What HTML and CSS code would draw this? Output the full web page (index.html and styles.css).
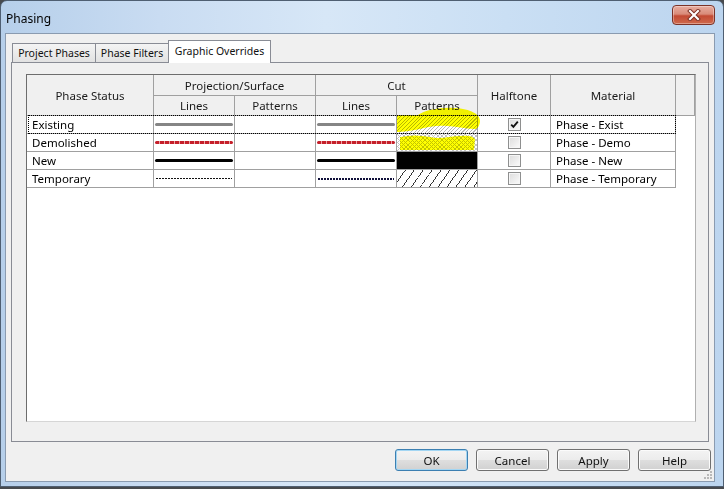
FILE: index.html
```html
<!DOCTYPE html>
<html>
<head>
<meta charset="utf-8">
<link rel="stylesheet" href="styles.css">
</head>
<body>
<div class="window">
  <div class="titlebar">
    <span class="title">Phasing</span>
    <div class="close">
      <svg width="16" height="12" viewBox="0 0 16 12">
        <path d="M4 2 L12 10 M12 2 L4 10" stroke="#7a3024" stroke-width="4" stroke-linecap="square" fill="none"/>
        <path d="M4 2 L12 10 M12 2 L4 10" stroke="#fff" stroke-width="2.1" stroke-linecap="square" fill="none"/>
      </svg>
    </div>
  </div>
  <div class="client">
    <div class="tabs">
      <div class="tab t1">Project Phases</div>
      <div class="tab t2">Phase Filters</div>
      <div class="tab t3">Graphic Overrides</div>
    </div>
    <div class="panel">
      <div class="gridbox">
        <div class="grid">
          <div class="h hs">Phase Status</div>
          <div class="h proj">Projection/Surface</div>
          <div class="h cut">Cut</div>
          <div class="h half">Halftone</div>
          <div class="h mat">Material</div>
          <div class="h blank"></div>
          <div class="h">Lines</div>
          <div class="h">Patterns</div>
          <div class="h">Lines</div>
          <div class="h">Patterns</div>

          <div class="c">Existing</div>
          <div class="lc"><div class="line gray"></div></div>
          <div></div>
          <div class="lc"><div class="line gray"></div></div>
          <div class="pc"><div class="pat hatch"></div></div>
          <div class="ck"><span class="cb"><svg width="11" height="11" viewBox="0 0 11 11"><path d="M2.2 5.6 L4.4 7.9 L8.8 2.6" stroke="#111" stroke-width="1.8" fill="none"/></svg></span></div>
          <div class="c">Phase - Exist</div>
          <div class="void"></div>

          <div class="c">Demolished</div>
          <div class="lc"><div class="line red"></div></div>
          <div></div>
          <div class="lc"><div class="line red"></div></div>
          <div class="pc"><div class="pat cross"></div></div>
          <div class="ck"><span class="cb"></span></div>
          <div class="c">Phase - Demo</div>
          <div class="void"></div>

          <div class="c">New</div>
          <div class="lc"><div class="line black"></div></div>
          <div></div>
          <div class="lc"><div class="line black"></div></div>
          <div class="pc"><div class="pat solid"></div></div>
          <div class="ck"><span class="cb"></span></div>
          <div class="c">Phase - New</div>
          <div class="void"></div>

          <div class="c">Temporary</div>
          <div class="lc"><div class="line dot1"></div></div>
          <div></div>
          <div class="lc"><div class="line dot2"></div></div>
          <div class="pc"><div class="pat diag"></div></div>
          <div class="ck"><span class="cb"></span></div>
          <div class="c">Phase - Temporary</div>
          <div class="void"></div>
        </div>
        <div class="focus"></div>
        <svg class="marker" width="670" height="348" viewBox="26 74 670 348">
          <path d="M397 115 L418 115 C425 110 440 107 455 108 C470 109 481 114 480 122 C479 127 477 129 475 129 C465 129 455 126 447 126 C437 125 428 127 420 129 C410 131 403 132 397 132 Z" fill="#ffff00"/>
          <path d="M400 137 C410 135 420 135 430 137 C440 140 450 136 460 136 C468 135 473 136 475 139 L474 150 L400 150 Z" fill="#ffff00"/>
        </svg>
      </div>
    </div>
    <div class="buttons">
      <div class="btn def">OK</div>
      <div class="btn">Cancel</div>
      <div class="btn">Apply</div>
      <div class="btn">Help</div>
    </div>
    <svg class="grip" width="10" height="10" viewBox="0 0 10 10">
      <g fill="#b8b8b8">
        <rect x="7" y="1" width="2" height="2"/>
        <rect x="4" y="4" width="2" height="2"/><rect x="7" y="4" width="2" height="2"/>
        <rect x="1" y="7" width="2" height="2"/><rect x="4" y="7" width="2" height="2"/><rect x="7" y="7" width="2" height="2"/>
      </g>
    </svg>
  </div>
</div>
</body>
</html>
```

FILE: styles.css
```css
html, body {
  margin: 0;
  padding: 0;
}
body {
  background: #474a4e;
  width: 724px;
  height: 489px;
  overflow: hidden;
  font-family: "Noto Sans", "DejaVu Sans", sans-serif;
  font-size: 11.5px;
  color: #000;
}
.window {
  box-sizing: border-box;
  width: 724px;
  height: 487px;
  border: 1px solid #4f5f72;
  border-radius: 7px 7px 0 0;
  background: linear-gradient(90deg, #b6cfea 0%, #c9dcf2 22%, #d7e7f7 45%, #cadff4 70%, #bcd5ef 100%);
  padding: 0 8px 4px 4px;
  display: flex;
  flex-direction: column;
}
.titlebar {
  height: 32px;
  flex: none;
  display: flex;
  align-items: center;
}
.title {
  padding-left: 1px;
  margin-top: 2px;
  font-size: 12px;
  color: #000;
}
.close {
  margin-left: auto;
  align-self: flex-start;
  margin-top: 4px;
  width: 43px;
  height: 20px;
  box-sizing: border-box;
  border: 1px solid #7b3328;
  border-radius: 4px;
  background: linear-gradient(#e8ada0 0%, #d98b79 45%, #c34a34 55%, #cf6a4c 100%);
  box-shadow: inset 0 0 0 1px rgba(255, 255, 255, 0.35);
  display: flex;
  align-items: center;
  justify-content: center;
}
.client {
  flex: 1;
  box-sizing: border-box;
  border: 1px solid #8a9bb0;
  background: #f0f0f0;
  display: flex;
  flex-direction: column;
  position: relative;
}
.tabs {
  display: flex;
  align-items: flex-end;
  height: 22px;
  margin-top: 6px;
  padding-left: 6px;
  position: relative;
  z-index: 1;
}
.tab {
  box-sizing: border-box;
  height: 19px;
  border: 1px solid #898c95;
  border-bottom: none;
  background: linear-gradient(#f4f4f4, #e2e2e2);
  display: flex;
  align-items: center;
  justify-content: center;
  color: #111;
  font-size: 10.5px;
}
.tab + .tab {
  margin-left: -1px;
}
.t1 { width: 84px; }
.t2 { width: 74px; }
.t3 {
  width: 103px;
  height: 23px;
  margin-bottom: -1px;
  background: #fff;
  padding-bottom: 3px;
}
.panel {
  margin: 0 5px;
  height: 380px;
  box-sizing: border-box;
  border: 1px solid #898c95;
  background: #f0f0f0;
}
.gridbox {
  margin: 11px 0 0 14px;
  width: 670px;
  height: 348px;
  box-sizing: border-box;
  border: 1px solid;
  border-color: #6d6d6d #b0b0b0 #d6d6d6 #6d6d6d;
  background: #fff;
  position: relative;
}
.grid {
  display: grid;
  grid-template-columns: 127px 81px 81px 81px 81px 73px 125px 19px;
  grid-template-rows: 21px 20px repeat(4, 18px);
}
.grid > div {
  box-sizing: border-box;
  border-right: 1px solid #a0a0a0;
  border-bottom: 1px solid #a0a0a0;
  min-width: 0;
}
.grid > .void {
  border: none;
}
.h {
  background: #f0f0f0;
  display: flex;
  align-items: center;
  justify-content: center;
  color: #1a1a1a;
  white-space: nowrap;
}
.hs { grid-row: 1 / 3; grid-column: 1; }
.proj { grid-column: 2 / 4; }
.cut { grid-column: 4 / 6; }
.half { grid-row: 1 / 3; grid-column: 6; }
.mat { grid-row: 1 / 3; grid-column: 7; }
.blank { grid-row: 1 / 3; grid-column: 8; }
.c {
  line-height: 17px;
  padding-left: 5px;
  white-space: nowrap;
}
.lc {
  display: flex;
  align-items: center;
  padding: 0 1px;
}
.line {
  height: 3px;
  width: 100%;
  border-radius: 1.5px;
}
.gray { background: #858585; }
.red { background: repeating-linear-gradient(90deg, #c51f2a 0 4px, #eba3a3 4px 5px); }
.black { background: #000; }
.dot1 {
  height: 1px;
  width: 76px;
  margin-left: 1px;
  border-radius: 0;
  background: repeating-linear-gradient(90deg, #111 0 2px, transparent 2px 3px);
}
.dot2 {
  height: 2px;
  width: 76px;
  margin-left: 1px;
  border-radius: 0;
  background: repeating-linear-gradient(90deg, #10103a 0 2px, transparent 2px 3px);
}
.pc {
  display: flex;
}
.pat {
  flex: 1;
}
.hatch {
  background: repeating-linear-gradient(135deg, #b8b8b8 0 0.8px, #ffffff 0.8px 2.6px);
}
.cross {
  background:
    repeating-linear-gradient(45deg, #c4c4c4 0 0.7px, transparent 0.7px 3px),
    repeating-linear-gradient(135deg, #c4c4c4 0 0.7px, #ffffff 0.7px 3px);
}
.solid { background: #000; }
.diag {
  background: repeating-linear-gradient(125deg, #fff 0 6.5px, #333 6.5px 7.3px);
}
.ck {
  display: flex;
  align-items: center;
  justify-content: center;
}
.cb {
  box-sizing: border-box;
  width: 13px;
  height: 13px;
  border: 1px solid #8e8f8f;
  background: linear-gradient(135deg, #dcdcdc, #fbfbfb);
  box-shadow: inset 0 0 0 1px #f6f6f6;
  display: flex;
  align-items: center;
  justify-content: center;
}
.focus {
  position: absolute;
  left: 1px;
  top: 40px;
  width: 648px;
  height: 19px;
  box-sizing: border-box;
  border: 1px dotted #000;
  pointer-events: none;
}
.marker {
  position: absolute;
  left: -1px;
  top: -1px;
  mix-blend-mode: multiply;
  pointer-events: none;
}
.buttons {
  display: flex;
  justify-content: flex-end;
  gap: 8px;
  margin-top: 7px;
  padding-right: 3px;
}
.btn {
  box-sizing: border-box;
  width: 73px;
  height: 22px;
  border: 1px solid #707070;
  border-radius: 3px;
  background: linear-gradient(#f3f3f3 0%, #ececec 48%, #dedede 52%, #d1d1d1 100%);
  box-shadow: inset 0 0 0 1px #fbfbfb;
  display: flex;
  align-items: center;
  justify-content: center;
  color: #111;
}
.btn.def {
  border-color: #3c7fb1;
  box-shadow: inset 0 0 0 1px #a3d6f3;
}
.grip {
  position: absolute;
  right: 1px;
  bottom: 1px;
}
```
